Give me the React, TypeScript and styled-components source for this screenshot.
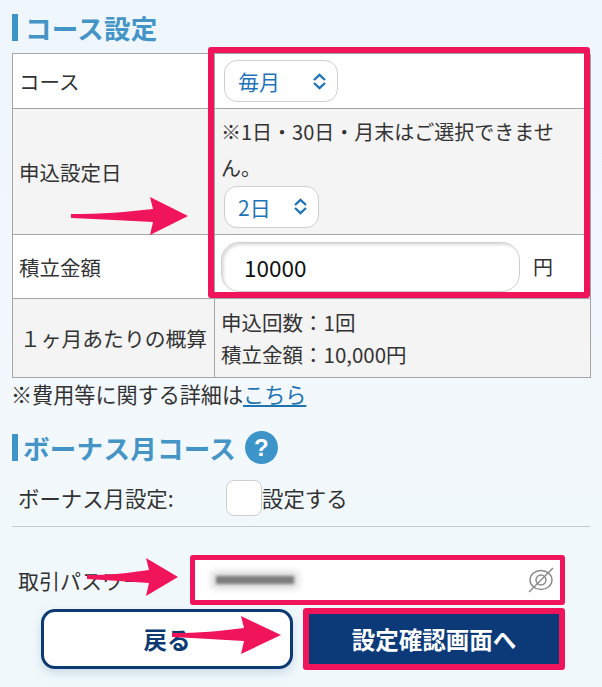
import React from "react";
import styled, { createGlobalStyle } from "styled-components";

const Global = createGlobalStyle`
  html, body { margin: 0; padding: 0; }
  body { font-family: "Noto Sans CJK JP", "Noto Sans", sans-serif; color: #333; }
  * { box-sizing: border-box; }
`;

const Page = styled.div`
  position: relative;
  width: 602px;
  height: 687px;
  overflow: hidden;
  padding: 14px 12px 0;
  background: linear-gradient(180deg, #eff6fc 0%, #f2f8fc 60%, #f0f8fb 100%);
`;

const Heading = styled.h2<{ $mt?: number; $indent?: number }>`
  display: flex;
  align-items: center;
  height: 27px;
  margin: ${(p) => p.$mt ?? 0}px 0 0;
  padding-left: ${(p) => p.$indent ?? 7}px;
  border-left: 6px solid #3d94c6;
  font-size: 26.5px;
  line-height: 27px;
  font-weight: 700;
  color: #4495c6;
  letter-spacing: 0.3px;
`;

const HelpBadge = styled.span`
  display: inline-flex;
  align-items: center;
  justify-content: center;
  width: 33px;
  height: 33px;
  margin-left: 9px;
  border-radius: 50%;
  background: #3d94c9;
  color: #fff;
  font: 700 24px "Liberation Sans", sans-serif;
`;

const Table = styled.div`
  display: grid;
  grid-template-columns: 202px 376px;
  grid-template-rows: 55px 126px 64px 79px;
  margin-top: 12px;
  border-top: 1px solid #a5a5a5;
  border-left: 1px solid #a5a5a5;
`;

const Cell = styled.div<{ $shade?: boolean; $center?: boolean; $pb?: number }>`
  display: flex;
  flex-direction: column;
  justify-content: center;
  align-items: ${(p) => (p.$center ? "center" : "flex-start")};
  padding: 0 6px ${(p) => p.$pb ?? 0}px;
  border-right: 1.5px solid #a5a5a5;
  border-bottom: 1.5px solid #a5a5a5;
  background: ${(p) => (p.$shade ? "#f4f4f4" : "#fff")};
  font-size: 20.5px;
  line-height: 32px;
  color: #333;
`;

const LongLabel = styled.span`
  font-size: 20.8px;
  white-space: nowrap;
`;

const Note = styled.div`
  margin-top: 2px;
  font-size: 20px;
  line-height: 36px;
  width: 345px;
`;

const Select = styled.div<{ $w: number }>`
  display: flex;
  align-items: center;
  justify-content: space-between;
  width: ${(p) => p.$w}px;
  height: 42px;
  margin-left: 3px;
  padding: 0 10px 0 13px;
  border: 1.5px solid #cfcfcf;
  border-radius: 13px;
  background: #fff;
  color: #1f74b8;
  font-size: 21px;
`;

const AmountRow = styled.div`
  display: flex;
  align-items: center;
  gap: 13px;
  align-self: stretch;
  font-size: 20px;
`;

const AmountInput = styled.div`
  display: flex;
  align-items: center;
  width: 299px;
  height: 50px;
  padding-left: 22px;
  border: 1.5px solid #cfcfcf;
  border-radius: 18px;
  box-shadow: inset 2px 2px 3px #dcdcdc;
  background: #fff;
  color: #111;
  font-size: 22.5px;
`;

const Estimate = styled.div`
  font-size: 20.5px;
  line-height: 32px;
`;

const Detail = styled.p`
  margin: 1px 0 0 -1px;
  font-size: 21.1px;
  line-height: 30px;
  color: #333;
`;

const DetailLink = styled.span`
  color: #1f74b0;
  text-decoration: underline;
`;

const BonusRow = styled.div`
  display: flex;
  align-items: center;
  height: 36px;
  margin-top: 19px;
  padding-left: 6px;
  font-size: 21.4px;
  line-height: 34px;
`;

const BonusLabel = styled.span`
  width: 208px;
`;

const Check = styled.span`
  width: 36px;
  height: 36px;
  border: 1.5px solid #cfcfcf;
  border-radius: 8px;
  background: #fff;
`;

const Divider = styled.hr`
  height: 1px;
  margin: 10px 0 0;
  border: 0;
  background: #c5c9cb;
`;

const PasswordRow = styled.div`
  display: flex;
  align-items: center;
  height: 50px;
  margin-top: 28px;
  padding-left: 6px;
  font-size: 21px;
`;

const PasswordLabel = styled.span`
  width: 172px;
  white-space: nowrap;
  overflow: hidden;
`;

const PasswordField = styled.div`
  display: flex;
  align-items: center;
  justify-content: space-between;
  width: 375px;
  height: 50px;
  padding: 0 6px 0 21px;
  border: 5px solid #f0145a;
  border-radius: 3px;
  background: #fff;
`;

const BlurredDots = styled.div`
  width: 78px;
  height: 8px;
  background: #7c7c7c;
  box-shadow: 0 0 7px 4px #d4d4d4;
  filter: blur(1.5px);
`;

const Buttons = styled.div`
  display: flex;
  align-items: flex-start;
  margin-top: 3px;
  padding-left: 29px;
`;

const BackButton = styled.div`
  display: flex;
  align-items: center;
  justify-content: center;
  width: 252px;
  height: 60px;
  margin-top: 1px;
  border: 3px solid #0d3b71;
  border-radius: 14px;
  background: #fff;
  box-shadow: 0 4px 8px rgba(90, 130, 170, 0.25);
  color: #0d3b71;
  font-size: 23.5px;
  font-weight: 700;
`;

const NextButton = styled.div`
  display: flex;
  align-items: center;
  justify-content: center;
  width: 262px;
  height: 62px;
  margin-left: 10px;
  border: 6px solid #f0145a;
  border-radius: 3px;
  background: #0c3a78;
  color: #fff;
  font-size: 23.5px;
  font-weight: 700;
`;

const Highlight = styled.div`
  position: absolute;
  left: 208px;
  top: 47px;
  width: 382px;
  height: 251px;
  border: 6px solid #f0145a;
  border-radius: 3px;
  pointer-events: none;
`;

const Arrow = styled.svg<{ $x: number; $y: number }>`
  position: absolute;
  left: ${(p) => p.$x}px;
  top: ${(p) => p.$y}px;
  pointer-events: none;
`;

const Chevrons = () => (
  <svg width="15" height="17" viewBox="0 0 15 17" fill="none" stroke="#1f74b8" strokeWidth="2.3">
    <path d="M2 7 L7.5 1.8 L13 7" />
    <path d="M2 10 L7.5 15.2 L13 10" />
  </svg>
);

const EyeOff = () => (
  <svg width="26" height="26" viewBox="0 0 26 26" fill="none" stroke="#8a8a8a" strokeWidth="1.4">
    <ellipse cx="13" cy="13" rx="11" ry="9.5" />
    <circle cx="13" cy="13" r="5" />
    <path d="M1 25 L25 1" />
  </svg>
);

const PinkArrow = ({ x, y, w, headW }: { x: number; y: number; w: number; headW: number }) => {
  const b = w - headW;
  return (
    <Arrow $x={x} $y={y} width={w} height="40" viewBox={`0 0 ${w} 40`}>
      <path
        d={`M0 18 C${b * 0.4} 18 ${b * 0.7} 16 ${b + 3} 13 L${b} 1 L${w} 20 L${b} 39 L${b + 3} 26 C${b * 0.7} 25 ${b * 0.4} 23 0 22 Z`}
        fill="#f0145a"
      />
    </Arrow>
  );
};

export default function App() {
  return (
    <Page>
      <Global />
      <Heading>コース設定</Heading>
      <Table>
        <Cell>コース</Cell>
        <Cell>
          <Select $w={114}>
            毎月
            <Chevrons />
          </Select>
        </Cell>
        <Cell $shade>申込設定日</Cell>
        <Cell $shade $pb={4}>
          <Note>※1日・30日・月末はご選択できません。</Note>
          <Select $w={95}>
            2日
            <Chevrons />
          </Select>
        </Cell>
        <Cell>積立金額</Cell>
        <Cell>
          <AmountRow>
            <AmountInput>10000</AmountInput>円
          </AmountRow>
        </Cell>
        <Cell $shade $center>
          <LongLabel>１ヶ月あたりの概算</LongLabel>
        </Cell>
        <Cell $shade>
          <Estimate>
            申込回数：1回
            <br />
            積立金額：10,000円
          </Estimate>
        </Cell>
      </Table>
      <Detail>
        ※費用等に関する詳細は<DetailLink>こちら</DetailLink>
      </Detail>
      <Heading $mt={25} $indent={5}>
        ボーナス月コース
        <HelpBadge>?</HelpBadge>
      </Heading>
      <BonusRow>
        <BonusLabel>ボーナス月設定:</BonusLabel>
        <Check />
        設定する
      </BonusRow>
      <Divider />
      <PasswordRow>
        <PasswordLabel>取引パスワード</PasswordLabel>
        <PasswordField>
          <BlurredDots />
          <EyeOff />
        </PasswordField>
      </PasswordRow>
      <Buttons>
        <BackButton>戻る</BackButton>
        <NextButton>設定確認画面へ</NextButton>
      </Buttons>
      <Highlight />
      <PinkArrow x={71} y={196} w={117} headW={38} />
      <PinkArrow x={87} y={557} w={91} headW={32} />
      <PinkArrow x={172} y={615} w={109} headW={40} />
    </Page>
  );
}
